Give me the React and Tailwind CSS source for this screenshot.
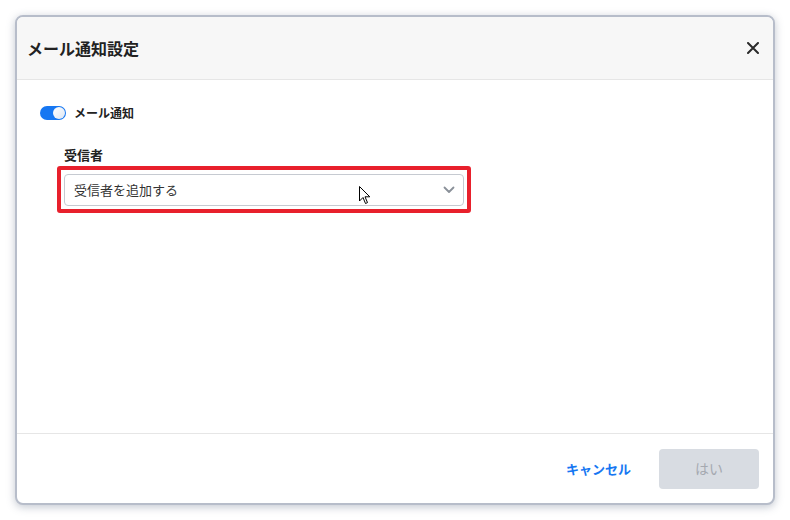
const Toggle = () => (
  <span className="relative inline-flex h-[14px] w-[26px] items-center rounded-full bg-[#1677f2]">
    <span className="absolute right-[1px] h-[12px] w-[12px] rounded-full bg-gradient-to-br from-white to-[#dde6f2]" />
  </span>
);

const Cursor = () => (
  <svg width="12" height="19" viewBox="0 0 12 19" className="absolute left-[359px] top-[186px]">
    <path d="M0.5 0.5 L0.5 15 L4 11.5 L6.5 17.5 L8.5 16.6 L6 10.8 L10.8 10.8 Z" fill="#fff" stroke="#000" strokeWidth="1" strokeLinejoin="round" />
  </svg>
);

const App = () => {
  return (
    <div
      className="relative w-[790px] h-[520px] bg-white p-[15px]"
      style={{ fontFamily: '"Noto Sans CJK JP", "Noto Sans", sans-serif' }}
    >
      <div className="flex h-[490px] w-[760px] flex-col overflow-hidden rounded-[8px] border-2 border-[#b7bdca] bg-white shadow-[0_2px_8px_rgba(120,130,150,0.45)]">
        {/* header */}
        <div className="flex h-[63px] shrink-0 items-center justify-between border-b border-[#e6e6e6] bg-[#f7f7f7] pl-[10px] pr-[14px]">
          <h1 className="text-[16px] font-bold text-[#222]">メール通知設定</h1>
          <svg width="12" height="12" viewBox="0 0 12 12">
            <path d="M1 1 L11 11 M11 1 L1 11" stroke="#2b2b2b" strokeWidth="2" strokeLinecap="round" />
          </svg>
        </div>

        {/* body */}
        <div className="flex-1 pl-[23px] pt-[24px]">
          <div className="flex items-center gap-2">
            <Toggle />
            <span className="text-[12px] font-bold text-[#222]">メール通知</span>
          </div>
          <div className="ml-[24px] mt-[23px]">
            <div className="text-[13px] font-bold leading-[20px] text-[#222]">受信者</div>
            <div className="ml-[-7px] mt-[1px] w-[414px] rounded-[3px] border-[4px] border-[#e8202c] px-[3px] pt-[4px] pb-[3px]">
              <div className="flex h-[32px] items-center justify-between rounded-[4px] border border-[#c6cad1] bg-white pl-[9px] pr-[8px]">
                <span className="text-[13px] text-[#333]">受信者を追加する</span>
                <svg width="12" height="8" viewBox="0 0 12 8">
                  <path d="M1.5 1.5 L6 6 L10.5 1.5" fill="none" stroke="#8a9099" strokeWidth="1.8" strokeLinecap="round" strokeLinejoin="round" />
                </svg>
              </div>
            </div>
          </div>
        </div>

        {/* footer */}
        <div className="flex h-[70px] shrink-0 items-center justify-end gap-[16px] border-t border-[#e6e6e6] pr-[14px]">
          <button className="px-3 text-[13px] font-bold text-[#1677f2]">キャンセル</button>
          <button className="h-[40px] w-[100px] rounded-[4px] bg-[#d8dce2] text-[14px] text-[#a5a9b0]">はい</button>
        </div>
      </div>
      <Cursor />
    </div>
  );
};

export default App;
